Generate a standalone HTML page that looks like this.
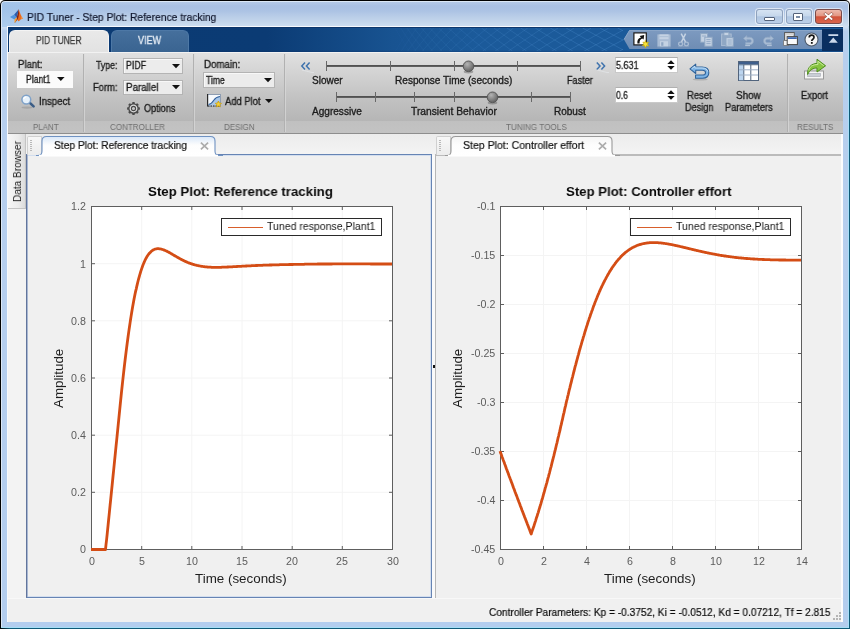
<!DOCTYPE html>
<html><head><meta charset="utf-8"><title>PID Tuner</title>
<style>
html,body{margin:0;padding:0;}
body{width:850px;height:629px;overflow:hidden;position:relative;background:#fff;font-family:"Liberation Sans",sans-serif;}
.b{position:absolute;box-sizing:border-box;}
.t{position:absolute;white-space:nowrap;transform-origin:0 0;display:block;will-change:transform;}
svg{position:absolute;overflow:visible;}
</style></head><body>
<div class="b" style="left:0px;top:0px;width:850px;height:629px;background:#000;border-radius:5px 5px 0 0;"></div>
<div class="b" style="left:1px;top:1px;width:848px;height:627px;background:#dbe7f5;border-radius:4px 4px 0 0;"></div>
<div class="b" style="left:2px;top:2px;width:846px;height:625px;border-radius:3px 3px 0 0;background:linear-gradient(to bottom,#b4c9e7 0,#a9c0e3 4px,#acc3e4 9px,#bacee8 15px,#c6d8ec 21px,#cfe0f3 25px,#b7cfee 29px,#b3cdee 100%);"></div>
<div class="b" style="left:1px;top:627px;width:848px;height:1px;background:#a4def6;"></div>
<div class="b" style="left:0px;top:628px;width:850px;height:1px;background:linear-gradient(to right,#000 0,#0f5a78 10px,#0f5a78 100%);"></div>
<div class="b" style="left:848px;top:26px;width:1px;height:602px;background:linear-gradient(to bottom,#c4daf0 0,#a8e0fa 40px,#a8e0fa 100%);"></div>
<div class="b" style="left:849px;top:6px;width:1px;height:623px;background:linear-gradient(to bottom,#000 0,#0a2a3a 22px,#0f5a78 40px,#0f5a78 100%);"></div>
<div class="b" style="left:2px;top:2px;width:120px;height:25px;background:linear-gradient(to right,rgba(158,196,236,.7),rgba(158,196,236,0));border-radius:3px 0 0 0;"></div>
<div class="b" style="left:7px;top:26px;width:836px;height:596px;background:#f7f9fc;"></div>
<svg style="left:10px;top:9px" width="14" height="15" viewBox="0 0 14 15">
<path d="M0,7.9 L4.2,5.6 L6.6,8.6 L4.4,10.6 Z" fill="#4f93db"/>
<path d="M4.2,5.6 L8.8,0.3 L7.6,5.5 L6.6,8.6 Z" fill="#2c5cab"/>
<path d="M8.8,0.3 C9.8,3.6 11,7.4 13.2,9.9 C11.8,9.6 10.6,10.6 9.4,11.8 C8.4,12.8 7.6,11.4 7,9.4 C7.6,6.4 8.4,3.4 8.8,0.3 Z" fill="#e8691c"/>
<path d="M8.8,0.3 C8.2,4 7,8.6 4.6,13.9 C6,12.8 7.4,11 8.2,9 C9,6.6 9.2,3.6 8.8,0.3 Z" fill="#7f2414"/>
<path d="M4.4,10.6 L6.6,8.6 L7,9.4 C6.4,11.4 5.6,13 4.6,13.9 Z" fill="#f2a035"/>
<path d="M11,6.4 C11.6,7.8 12.3,9 13.2,9.9 C12.4,9.7 11.6,10 10.9,10.5 Z" fill="#f3a04a" opacity=".7"/>
</svg>
<span class="t" style="left:27.00px;top:12.02px;font-size:11.2px;line-height:11.2px;color:#10162c;font-weight:normal;transform:scaleX(0.9197);-webkit-text-stroke:0.2px #10162c;">PID Tuner - Step Plot: Reference tracking</span>
<div class="b" style="left:756px;top:9px;width:27px;height:15px;border:1px solid #8fa2bd;border-radius:3px;background:linear-gradient(to bottom,#d6e3f2 0,#c6d7eb 45%,#b0c6e2 52%,#bbcfe8 100%);box-shadow:0 0 0 1px rgba(255,255,255,.6);"></div>
<div class="b" style="left:785.5px;top:9px;width:26px;height:15px;border:1px solid #8fa2bd;border-radius:3px;background:linear-gradient(to bottom,#d6e3f2 0,#c6d7eb 45%,#b0c6e2 52%,#bbcfe8 100%);box-shadow:0 0 0 1px rgba(255,255,255,.6);"></div>
<div class="b" style="left:814.5px;top:9px;width:27px;height:15px;border:1px solid #7b4a48;border-radius:3px;background:linear-gradient(to bottom,#ecb9ac 0,#e39683 45%,#d2523a 52%,#d8644c 100%);box-shadow:0 0 0 1px rgba(255,255,255,.55);"></div>
<div class="b" style="left:764px;top:17px;width:11px;height:4px;background:#fff;border:1px solid #54627a;border-radius:1px;"></div>
<div class="b" style="left:793px;top:12.6px;width:10px;height:8px;background:#fff;border:1px solid #54627a;border-radius:1px;"></div>
<div class="b" style="left:796px;top:15.6px;width:4px;height:2px;background:#7c8da6;"></div>
<svg style="left:823.5px;top:13.2px" width="9" height="7" viewBox="0 0 9 8" preserveAspectRatio="none"><path d="M1.6,1.2 L7.4,6.8 M7.4,1.2 L1.6,6.8" stroke="#7a4038" stroke-width="3.2" stroke-linecap="square" opacity=".7"/><path d="M1.6,1.2 L7.4,6.8 M7.4,1.2 L1.6,6.8" stroke="#fff" stroke-width="2" stroke-linecap="square"/></svg>
<div class="b" style="left:8px;top:27px;width:835px;height:25px;background:linear-gradient(to right,#0b3a73 0,#0b3b74 31%,#185391 46%,#1b5a9a 56%,#1b5a9a 100%);"></div>
<div class="b" style="left:8px;top:27px;width:835px;height:1px;background:#0a3266;opacity:.85;"></div>
<div class="b" style="left:8px;top:50px;width:835px;height:2px;background:linear-gradient(rgba(10,40,90,0),rgba(10,40,90,.35));"></div>
<svg style="left:395px;top:28px;overflow:hidden" width="228" height="23" viewBox="0 0 228 23"><path d="M0.0,0 L14.4,24 M14.4,0 L0.0,24" stroke="#4f8fd0" stroke-width="0.7" opacity="0.08" fill="none"/><path d="M5.6,0 L21.7,24 M21.7,0 L5.6,24" stroke="#4f8fd0" stroke-width="0.7" opacity="0.10" fill="none"/><path d="M11.8,0 L29.8,24 M29.8,0 L11.8,24" stroke="#4f8fd0" stroke-width="0.7" opacity="0.12" fill="none"/><path d="M18.8,0 L38.5,24 M38.5,0 L18.8,24" stroke="#4f8fd0" stroke-width="0.7" opacity="0.15" fill="none"/><path d="M26.4,0 L47.9,24 M47.9,0 L26.4,24" stroke="#4f8fd0" stroke-width="0.7" opacity="0.17" fill="none"/><path d="M34.7,0 L57.9,24 M57.9,0 L34.7,24" stroke="#4f8fd0" stroke-width="0.7" opacity="0.19" fill="none"/><path d="M43.7,0 L68.7,24 M68.7,0 L43.7,24" stroke="#4f8fd0" stroke-width="0.7" opacity="0.21" fill="none"/><path d="M53.4,0 L80.1,24 M80.1,0 L53.4,24" stroke="#4f8fd0" stroke-width="0.7" opacity="0.23" fill="none"/><path d="M63.7,0 L92.2,24 M92.2,0 L63.7,24" stroke="#4f8fd0" stroke-width="0.7" opacity="0.26" fill="none"/><path d="M74.8,0 L105.0,24 M105.0,0 L74.8,24" stroke="#4f8fd0" stroke-width="0.7" opacity="0.28" fill="none"/><path d="M86.5,0 L118.5,24 M118.5,0 L86.5,24" stroke="#4f8fd0" stroke-width="0.7" opacity="0.30" fill="none"/><path d="M98.9,0 L132.7,24 M132.7,0 L98.9,24" stroke="#4f8fd0" stroke-width="0.7" opacity="0.32" fill="none"/><path d="M112.0,0 L147.5,24 M147.5,0 L112.0,24" stroke="#4f8fd0" stroke-width="0.7" opacity="0.34" fill="none"/><path d="M125.7,0 L163.0,24 M163.0,0 L125.7,24" stroke="#4f8fd0" stroke-width="0.7" opacity="0.37" fill="none"/><path d="M140.2,0 L179.2,24 M179.2,0 L140.2,24" stroke="#4f8fd0" stroke-width="0.7" opacity="0.39" fill="none"/><path d="M155.3,0 L196.1,24 M196.1,0 L155.3,24" stroke="#4f8fd0" stroke-width="0.7" opacity="0.41" fill="none"/><path d="M171.1,0 L213.7,24 M213.7,0 L171.1,24" stroke="#4f8fd0" stroke-width="0.7" opacity="0.43" fill="none"/><path d="M187.6,0 L231.9,24 M231.9,0 L187.6,24" stroke="#4f8fd0" stroke-width="0.7" opacity="0.45" fill="none"/><path d="M204.8,0 L250.9,24 M250.9,0 L204.8,24" stroke="#4f8fd0" stroke-width="0.7" opacity="0.48" fill="none"/><path d="M222.6,0 L270.5,24 M270.5,0 L222.6,24" stroke="#4f8fd0" stroke-width="0.7" opacity="0.50" fill="none"/><path d="M241.2,0 L290.8,24 M290.8,0 L241.2,24" stroke="#4f8fd0" stroke-width="0.7" opacity="0.52" fill="none"/><path d="M260.4,0 L311.8,24 M311.8,0 L260.4,24" stroke="#4f8fd0" stroke-width="0.7" opacity="0.54" fill="none"/><path d="M280.3,0 L333.4,24 M333.4,0 L280.3,24" stroke="#4f8fd0" stroke-width="0.7" opacity="0.55" fill="none"/><path d="M300.9,0 L355.8,24 M355.8,0 L300.9,24" stroke="#4f8fd0" stroke-width="0.7" opacity="0.55" fill="none"/><path d="M322.2,0 L378.8,24 M378.8,0 L322.2,24" stroke="#4f8fd0" stroke-width="0.7" opacity="0.55" fill="none"/><path d="M344.1,0 L402.5,24 M402.5,0 L344.1,24" stroke="#4f8fd0" stroke-width="0.7" opacity="0.55" fill="none"/></svg>
<div class="b" style="left:9px;top:30px;width:100px;height:23px;background:linear-gradient(to bottom,#e9e9e9 0,#e2e2e2 100%);border-radius:6px 6px 0 0;border:1px solid #f4f4f4;border-bottom:none;"></div>
<span class="t" style="left:35.70px;top:35.06px;font-size:10.8px;line-height:10.8px;color:#3a3a3a;font-weight:normal;transform:scaleX(0.7844);-webkit-text-stroke:0.25px #3a3a3a;">PID TUNER</span>
<div class="b" style="left:111px;top:30px;width:78px;height:22px;background:linear-gradient(to bottom,#456f9c 0,#3a6491 100%);border-radius:6px 6px 0 0;border:1px solid #4d78a6;border-bottom:none;"></div>
<span class="t" style="left:138.00px;top:35.06px;font-size:10.8px;line-height:10.8px;color:#e4ecf5;font-weight:normal;transform:scaleX(0.8333);-webkit-text-stroke:0.35px #e4ecf5;">VIEW</span>
<svg style="left:623.5px;top:30px" width="198.5" height="20" viewBox="0 0 198.5 20"><defs><linearGradient id="qg" x1="0" y1="0" x2="0" y2="1"><stop offset="0" stop-color="#7d9ac0"/><stop offset="1" stop-color="#6f8db4"/></linearGradient></defs><path d="M0,9.5 L5.5,0 L198.5,0 L198.5,19 L5.5,19 Z" fill="url(#qg)"/><path d="M0,9.5 L5.5,0.5 L198.5,0.5" fill="none" stroke="#8ba6c8" stroke-width="1"/></svg>
<div class="b" style="left:822px;top:29px;width:21px;height:22px;background:#0a2f60;"></div>
<div class="b" style="left:8px;top:52px;width:835px;height:70px;background:linear-gradient(to bottom,#e1e1e1 0,#d4d4d4 28%,#c3c3c3 64%,#b5b5b5 100%);"></div>
<div class="b" style="left:8px;top:52px;width:835px;height:1px;background:#f2f2f2;"></div>
<div class="b" style="left:8px;top:121px;width:835px;height:12px;background:linear-gradient(to bottom,#c0c0c0,#c3c3c3);"></div>
<div class="b" style="left:8px;top:133px;width:835px;height:1px;background:#8e8e8e;"></div>
<div class="b" style="left:83px;top:54px;width:1px;height:78px;background:#b1b1b1;"></div>
<div class="b" style="left:84px;top:54px;width:1px;height:78px;background:#dadada;opacity:.7;"></div>
<div class="b" style="left:193px;top:54px;width:1px;height:78px;background:#b1b1b1;"></div>
<div class="b" style="left:194px;top:54px;width:1px;height:78px;background:#dadada;opacity:.7;"></div>
<div class="b" style="left:284px;top:54px;width:1px;height:78px;background:#b1b1b1;"></div>
<div class="b" style="left:285px;top:54px;width:1px;height:78px;background:#dadada;opacity:.7;"></div>
<div class="b" style="left:787px;top:54px;width:1px;height:78px;background:#b1b1b1;"></div>
<div class="b" style="left:788px;top:54px;width:1px;height:78px;background:#dadada;opacity:.7;"></div>
<span class="t" style="left:17.50px;top:59.63px;font-size:10px;line-height:10px;color:#1c1c1c;font-weight:normal;transform:scaleX(0.9581);-webkit-text-stroke:0.32px #1c1c1c;">Plant:</span>
<div class="b" style="left:17px;top:71px;width:56px;height:17px;background:#fbfbfb;"></div>
<span class="t" style="left:26.40px;top:74.83px;font-size:10px;line-height:10px;color:#1c1c1c;font-weight:normal;transform:scaleX(0.8640);-webkit-text-stroke:0.32px #1c1c1c;">Plant1</span>
<svg style="left:56.7px;top:77.4px" width="7.6" height="4" viewBox="0 0 7.6 4"><path d="M0,0 L7.6,0 L3.8,4 Z" fill="#111"/></svg>
<svg style="left:20px;top:94px" width="16" height="15" viewBox="0 0 16 15">
<ellipse cx="7" cy="13.6" rx="5.5" ry="1.1" fill="#8a8a8a" opacity=".45"/>
<path d="M9.6,8.6 L13.6,12.4" stroke="#3b5d86" stroke-width="2.6" stroke-linecap="round"/>
<circle cx="6.3" cy="5.6" r="4.4" fill="#e6f1fb" stroke="#7fa2c9" stroke-width="1.5"/>
<path d="M3.6,5 A3,3 0 0 1 6.2,2.8" stroke="#fff" stroke-width="1.2" fill="none"/>
</svg>
<span class="t" style="left:38.60px;top:96.83px;font-size:10px;line-height:10px;color:#1c1c1c;font-weight:normal;transform:scaleX(0.9615);-webkit-text-stroke:0.32px #1c1c1c;">Inspect</span>
<span class="t" style="left:96.30px;top:61.33px;font-size:10px;line-height:10px;color:#1c1c1c;font-weight:normal;transform:scaleX(0.8790);-webkit-text-stroke:0.32px #1c1c1c;">Type:</span>
<span class="t" style="left:93.00px;top:82.83px;font-size:10px;line-height:10px;color:#1c1c1c;font-weight:normal;transform:scaleX(0.9384);-webkit-text-stroke:0.32px #1c1c1c;">Form:</span>
<div class="b" style="left:123px;top:58px;width:60px;height:15.5px;background:#ececec;border:1px solid #b4b4b4;box-shadow:inset 1px 1px 0 #f8f8f8;"></div>
<span class="t" style="left:125.60px;top:61.33px;font-size:10px;line-height:10px;color:#1c1c1c;font-weight:normal;transform:scaleX(0.8780);-webkit-text-stroke:0.32px #1c1c1c;">PIDF</span>
<svg style="left:172.4px;top:63.7px" width="8" height="4.2" viewBox="0 0 8 4.2"><path d="M0,0 L8,0 L4.0,4.2 Z" fill="#111"/></svg>
<div class="b" style="left:123px;top:79.5px;width:60px;height:15.5px;background:#ececec;border:1px solid #b4b4b4;box-shadow:inset 1px 1px 0 #f8f8f8;"></div>
<span class="t" style="left:125.60px;top:82.83px;font-size:10px;line-height:10px;color:#1c1c1c;font-weight:normal;transform:scaleX(0.9745);-webkit-text-stroke:0.32px #1c1c1c;">Parallel</span>
<svg style="left:172.4px;top:85.2px" width="8" height="4.2" viewBox="0 0 8 4.2"><path d="M0,0 L8,0 L4.0,4.2 Z" fill="#111"/></svg>
<svg style="left:126.5px;top:102.2px" width="13" height="13" viewBox="0 0 13 13">
<g transform="translate(6.5,6.5)">
<g fill="#4a4a4a"><rect x="-1.3" y="-6.4" width="2.6" height="3" rx=".6" transform="rotate(0)"/><rect x="-1.3" y="-6.4" width="2.6" height="3" rx=".6" transform="rotate(45)"/><rect x="-1.3" y="-6.4" width="2.6" height="3" rx=".6" transform="rotate(90)"/><rect x="-1.3" y="-6.4" width="2.6" height="3" rx=".6" transform="rotate(135)"/><rect x="-1.3" y="-6.4" width="2.6" height="3" rx=".6" transform="rotate(180)"/><rect x="-1.3" y="-6.4" width="2.6" height="3" rx=".6" transform="rotate(225)"/><rect x="-1.3" y="-6.4" width="2.6" height="3" rx=".6" transform="rotate(270)"/><rect x="-1.3" y="-6.4" width="2.6" height="3" rx=".6" transform="rotate(315)"/></g>
<circle r="4.6" fill="#dcdcdc" stroke="#4a4a4a" stroke-width="1.3"/>
<circle r="2.1" fill="#c8c8c8" stroke="#4a4a4a" stroke-width="1.1"/>
</g></svg>
<span class="t" style="left:144.30px;top:103.73px;font-size:10px;line-height:10px;color:#1c1c1c;font-weight:normal;transform:scaleX(0.9111);-webkit-text-stroke:0.32px #1c1c1c;">Options</span>
<span class="t" style="left:203.80px;top:59.63px;font-size:10px;line-height:10px;color:#1c1c1c;font-weight:normal;transform:scaleX(0.9721);-webkit-text-stroke:0.32px #1c1c1c;">Domain:</span>
<div class="b" style="left:203px;top:72px;width:72px;height:16px;background:#ececec;border:1px solid #b4b4b4;box-shadow:inset 1px 1px 0 #f8f8f8;"></div>
<span class="t" style="left:206.30px;top:75.83px;font-size:10px;line-height:10px;color:#1c1c1c;font-weight:normal;transform:scaleX(0.8558);-webkit-text-stroke:0.32px #1c1c1c;">Time</span>
<svg style="left:264.4px;top:78.0px" width="8" height="4.2" viewBox="0 0 8 4.2"><path d="M0,0 L8,0 L4.0,4.2 Z" fill="#111"/></svg>
<svg style="left:206.5px;top:94px" width="16" height="14" viewBox="0 0 16 14">
<rect x=".5" y=".5" width="13" height="11.5" fill="#f6f9fd" stroke="#8e9db2" stroke-width="1"/>
<path d="M.6,0 L.6,12.4" stroke="#2a2a2a" stroke-width="1.2"/>
<path d="M1.5,10.5 C4,10 5.5,8.5 7,6 C8.5,3.6 10,2.8 13,2.5 L13,11.5 L1.5,11.5 Z" fill="#a9c6e6"/>
<path d="M1.5,10.5 C4,10 5.5,8.5 7,6 C8.5,3.6 10,2.8 13,2.5" fill="none" stroke="#2f5f9c" stroke-width="1.1"/>
<path d="M1,12 L13.5,12" stroke="#222" stroke-width="1.2" stroke-dasharray="1.5,1"/>
<path d="M11.4,7 L12.3,9 L14.4,9.3 L12.9,10.8 L13.3,12.9 L11.4,11.9 L9.5,12.9 L9.9,10.8 L8.4,9.3 L10.5,9 Z" fill="#f6d23a" stroke="#c89a00" stroke-width=".7" stroke-linejoin="round"/>
</svg>
<span class="t" style="left:224.50px;top:96.63px;font-size:10px;line-height:10px;color:#1c1c1c;font-weight:normal;transform:scaleX(0.9391);-webkit-text-stroke:0.32px #1c1c1c;">Add Plot</span>
<svg style="left:264.5px;top:99.4px" width="7.6" height="4" viewBox="0 0 7.6 4"><path d="M0,0 L7.6,0 L3.8,4 Z" fill="#111"/></svg>
<span class="t" style="left:32.75px;top:123.07px;font-size:8.3px;line-height:8.3px;color:#6f6f6f;font-weight:normal;transform:scaleX(0.9532);">PLANT</span>
<span class="t" style="left:110.20px;top:123.07px;font-size:8.3px;line-height:8.3px;color:#6f6f6f;font-weight:normal;transform:scaleX(0.9696);">CONTROLLER</span>
<span class="t" style="left:223.65px;top:123.07px;font-size:8.3px;line-height:8.3px;color:#6f6f6f;font-weight:normal;transform:scaleX(0.9647);">DESIGN</span>
<span class="t" style="left:506.20px;top:123.07px;font-size:8.3px;line-height:8.3px;color:#6f6f6f;font-weight:normal;transform:scaleX(0.9814);">TUNING TOOLS</span>
<span class="t" style="left:796.80px;top:123.07px;font-size:8.3px;line-height:8.3px;color:#6f6f6f;font-weight:normal;transform:scaleX(0.9663);">RESULTS</span>
<svg style="left:301px;top:62px" width="10" height="8" viewBox="0 0 10 8"><path d="M4,0.5 L0.8,4 L4,7.5 M8.6,0.5 L5.4,4 L8.6,7.5" fill="none" stroke="#3f73ad" stroke-width="1.5"/></svg>
<svg style="left:302px;top:70px" width="12" height="3" viewBox="0 0 12 3"><path d="M0,0 L10,2.5 L12,2.5" stroke="#eef2f6" stroke-width="1.1" fill="none" opacity=".45"/></svg>
<svg style="left:595.5px;top:62px" width="10" height="8" viewBox="0 0 10 8"><path d="M0.8,0.5 L4,4 L0.8,7.5 M5.4,0.5 L8.6,4 L5.4,7.5" fill="none" stroke="#3f73ad" stroke-width="1.5"/></svg>
<svg style="left:596.5px;top:70px" width="12" height="3" viewBox="0 0 12 3"><path d="M0,0 L10,2.5 L12,2.5" stroke="#eef2f6" stroke-width="1.1" fill="none" opacity=".45"/></svg>
<div class="b" style="left:326px;top:65px;width:255px;height:2px;background:linear-gradient(#4a4a4a,#666);"></div>
<div class="b" style="left:326px;top:61px;width:1px;height:10px;background:#686868;"></div>
<div class="b" style="left:390px;top:61px;width:1px;height:10px;background:#686868;"></div>
<div class="b" style="left:454px;top:61px;width:1px;height:10px;background:#686868;"></div>
<div class="b" style="left:517px;top:61px;width:1px;height:10px;background:#686868;"></div>
<div class="b" style="left:580px;top:61px;width:1px;height:10px;background:#686868;"></div>
<svg style="left:462.1px;top:60px" width="13" height="14" viewBox="0 0 13 14"><defs><radialGradient id="tg66" cx=".38" cy=".3" r=".8"><stop offset="0" stop-color="#b4b4b4"/><stop offset=".5" stop-color="#868686"/><stop offset="1" stop-color="#565656"/></radialGradient></defs><ellipse cx="6.5" cy="11.8" rx="4.8" ry="1.7" fill="#5a5a5a" opacity=".45"/><circle cx="6.5" cy="6.3" r="5.3" fill="url(#tg66)" stroke="#585858" stroke-width="1"/></svg>
<div class="b" style="left:336px;top:96px;width:235px;height:2px;background:linear-gradient(#4a4a4a,#666);"></div>
<div class="b" style="left:336px;top:92px;width:1px;height:10px;background:#686868;"></div>
<div class="b" style="left:375px;top:92px;width:1px;height:10px;background:#686868;"></div>
<div class="b" style="left:414px;top:92px;width:1px;height:10px;background:#686868;"></div>
<div class="b" style="left:454px;top:92px;width:1px;height:10px;background:#686868;"></div>
<div class="b" style="left:492px;top:92px;width:1px;height:10px;background:#686868;"></div>
<div class="b" style="left:531px;top:92px;width:1px;height:10px;background:#686868;"></div>
<div class="b" style="left:570px;top:92px;width:1px;height:10px;background:#686868;"></div>
<svg style="left:485.9px;top:91px" width="13" height="14" viewBox="0 0 13 14"><defs><radialGradient id="tg97" cx=".38" cy=".3" r=".8"><stop offset="0" stop-color="#b4b4b4"/><stop offset=".5" stop-color="#868686"/><stop offset="1" stop-color="#565656"/></radialGradient></defs><ellipse cx="6.5" cy="11.8" rx="4.8" ry="1.7" fill="#5a5a5a" opacity=".45"/><circle cx="6.5" cy="6.3" r="5.3" fill="url(#tg97)" stroke="#585858" stroke-width="1"/></svg>
<span class="t" style="left:311.50px;top:75.53px;font-size:10px;line-height:10px;color:#1c1c1c;font-weight:normal;transform:scaleX(0.9978);-webkit-text-stroke:0.32px #1c1c1c;">Slower</span>
<span class="t" style="left:394.90px;top:75.53px;font-size:10px;line-height:10px;color:#1c1c1c;font-weight:normal;transform:scaleX(1.0098);-webkit-text-stroke:0.32px #1c1c1c;">Response Time (seconds)</span>
<span class="t" style="left:567.00px;top:75.53px;font-size:10px;line-height:10px;color:#1c1c1c;font-weight:normal;transform:scaleX(0.9068);-webkit-text-stroke:0.32px #1c1c1c;">Faster</span>
<span class="t" style="left:311.50px;top:106.63px;font-size:10px;line-height:10px;color:#1c1c1c;font-weight:normal;transform:scaleX(1.0067);-webkit-text-stroke:0.32px #1c1c1c;">Aggressive</span>
<span class="t" style="left:411.00px;top:106.63px;font-size:10px;line-height:10px;color:#1c1c1c;font-weight:normal;transform:scaleX(1.0268);-webkit-text-stroke:0.32px #1c1c1c;">Transient Behavior</span>
<span class="t" style="left:554.30px;top:106.63px;font-size:10px;line-height:10px;color:#1c1c1c;font-weight:normal;transform:scaleX(1.0005);-webkit-text-stroke:0.32px #1c1c1c;">Robust</span>
<div class="b" style="left:615px;top:57px;width:63px;height:16px;background:#fff;border:1px solid #c9c9c9;border-top-color:#b0b0b0;"></div>
<span class="t" style="left:616.00px;top:61.23px;font-size:10px;line-height:10px;color:#1c1c1c;font-weight:normal;transform:scaleX(0.8991);-webkit-text-stroke:0.32px #1c1c1c;">5.631</span>
<svg style="left:667px;top:60px" width="8" height="10" viewBox="0 0 8 10"><path d="M0.3,4 L7.7,4 L4,0.2 Z M0.3,6 L7.7,6 L4,9.8 Z" fill="#111"/></svg>
<div class="b" style="left:615px;top:87px;width:63px;height:16px;background:#fff;border:1px solid #c9c9c9;border-top-color:#b0b0b0;"></div>
<span class="t" style="left:616.00px;top:91.23px;font-size:10px;line-height:10px;color:#1c1c1c;font-weight:normal;transform:scaleX(0.8632);-webkit-text-stroke:0.32px #1c1c1c;">0.6</span>
<svg style="left:667px;top:90px" width="8" height="10" viewBox="0 0 8 10"><path d="M0.3,4 L7.7,4 L4,0.2 Z M0.3,6 L7.7,6 L4,9.8 Z" fill="#111"/></svg>
<svg style="left:688.6px;top:62.8px" width="21.5" height="17.8" viewBox="0 0 23 19">
<ellipse cx="12" cy="17.6" rx="8" ry="1.2" fill="#777" opacity=".35"/>
<path d="M1,6.3 L7.2,1.2 L7.2,4.3 L14,4.3 C18.8,4.3 21.2,7 21.2,10.3 C21.2,13.8 18.6,16.2 14.5,16.2 L7,16.2 L7,12.9 L14.2,12.9 C16.4,12.9 17.7,11.9 17.7,10.3 C17.7,8.7 16.4,7.8 14.2,7.8 L7.2,7.8 L7.2,11.2 Z" fill="#7db4e6" stroke="#2f6299" stroke-width="1.1" stroke-linejoin="round"/>
<path d="M2.8,6.2 L6.3,3.4 L6.3,5.3 L14,5.3 C17.6,5.3 19.6,7 20.1,9.2" fill="none" stroke="#c9e2f7" stroke-width="1"/>
</svg>
<span class="t" style="left:686.65px;top:90.73px;font-size:10px;line-height:10px;color:#1c1c1c;font-weight:normal;transform:scaleX(0.9455);-webkit-text-stroke:0.32px #1c1c1c;">Reset</span>
<span class="t" style="left:684.95px;top:102.83px;font-size:10px;line-height:10px;color:#1c1c1c;font-weight:normal;transform:scaleX(0.9155);-webkit-text-stroke:0.32px #1c1c1c;">Design</span>
<svg style="left:738px;top:61px" width="21" height="20" viewBox="0 0 21 20">
<rect x=".5" y=".5" width="20" height="19" fill="#fff" stroke="#51647d" stroke-width="1"/>
<rect x="1" y="1" width="19" height="2.6" fill="#3f5f8c"/>
<rect x="1" y="3.6" width="4.6" height="15.6" fill="#bcd5ef"/>
<path d="M5.8,3.6 L5.8,19 M12.8,3.6 L12.8,19" stroke="#51647d" stroke-width="1"/>
<path d="M1,8.8 L20,8.8 M1,14 L20,14" stroke="#9fb0c6" stroke-width="1"/>
<path d="M1,3.8 L20,3.8" stroke="#51647d" stroke-width=".8"/>
</svg>
<span class="t" style="left:736.45px;top:90.73px;font-size:10px;line-height:10px;color:#1c1c1c;font-weight:normal;transform:scaleX(0.9874);-webkit-text-stroke:0.32px #1c1c1c;">Show</span>
<span class="t" style="left:725.15px;top:102.83px;font-size:10px;line-height:10px;color:#1c1c1c;font-weight:normal;transform:scaleX(0.9229);-webkit-text-stroke:0.32px #1c1c1c;">Parameters</span>
<svg style="left:803px;top:58px" width="24" height="23" viewBox="0 0 24 23">
<rect x="1.5" y="13" width="19" height="8" fill="#f6f6f6" stroke="#9a9a9a" stroke-width="1"/>
<rect x="4.5" y="15.3" width="13" height="3.2" fill="#c9ced6" stroke="#a4a9b1" stroke-width=".6"/>
<path d="M4.6,16.5 C4.2,9.5 8.2,5.6 14,5.4 L14,1.2 L22.6,7.8 L14,14 L14,10 C10.4,10 7,11.4 4.6,16.5 Z" fill="#86c440" stroke="#4f8f1f" stroke-width="1" stroke-linejoin="round"/>
<path d="M5.8,12.5 C6.4,8.6 9.6,6.6 14.9,6.5 L14.9,3.2 L20.8,7.8" fill="none" stroke="#c9eb9c" stroke-width="1"/>
</svg>
<span class="t" style="left:801.10px;top:90.73px;font-size:10px;line-height:10px;color:#1c1c1c;font-weight:normal;transform:scaleX(0.9342);-webkit-text-stroke:0.32px #1c1c1c;">Export</span>
<div class="b" style="left:8px;top:134px;width:834.5px;height:487.5px;background:#fcfcfd;"></div>
<div class="b" style="left:8px;top:134px;width:832.5px;height:487.5px;background:#f0f0f0;"></div>
<div class="b" style="left:8px;top:134px;width:18px;height:464px;background:#f3f3f3;"></div>
<div class="b" style="left:8px;top:134px;width:18px;height:75px;background:linear-gradient(to right,#f6f6f6 0,#ececec 60%,#dcdcdc 100%);border-right:1px solid #c4c4c4;border-bottom:1px solid #c4c4c4;"></div>
<span class="t" style="left:12.3px;top:202.2px;font-size:11px;line-height:11px;color:#222;transform-origin:0 0;transform:rotate(-90deg) scaleX(0.9154);">Data Browser</span>
<div class="b" style="left:26px;top:134px;width:814.5px;height:21px;background:linear-gradient(to bottom,#ececec,#f4f4f4);"></div>
<div class="b" style="left:26px;top:154px;width:406px;height:444px;border:1px solid #6684b4;background:#f0f0f0;box-shadow:inset 0 0 0 1px #d3deee;border-left-color:#62759c;"></div>
<div class="b" style="left:27px;top:155px;width:1px;height:442px;background:#a9b8d3;"></div>
<div class="b" style="left:435px;top:154px;width:405.5px;height:445px;border-left:1px solid #b6b6b6;border-top:2px solid #bbbbbb;background:#f0f0f0;"></div>
<div class="b" style="left:436px;top:598px;width:405px;height:1px;background:#f9f9f9;"></div>
<div class="b" style="left:432px;top:155px;width:3px;height:443px;background:#fafafa;"></div>
<div class="b" style="left:433px;top:365px;width:2px;height:3px;background:#111;"></div>
<div class="b" style="left:27px;top:136px;width:15px;height:19px;background:linear-gradient(to bottom,#f8f8f8,#ececec);border:1px solid #d0d0d0;border-bottom:none;border-radius:2px 0 0 0;"></div>
<div class="b" style="left:30px;top:139.5px;width:2px;height:1px;background:#b9b9b9;"></div>
<div class="b" style="left:30px;top:141.5px;width:2px;height:1px;background:#b9b9b9;"></div>
<div class="b" style="left:30px;top:143.5px;width:2px;height:1px;background:#b9b9b9;"></div>
<div class="b" style="left:30px;top:145.5px;width:2px;height:1px;background:#b9b9b9;"></div>
<div class="b" style="left:30px;top:147.5px;width:2px;height:1px;background:#b9b9b9;"></div>
<div class="b" style="left:30px;top:149.5px;width:2px;height:1px;background:#b9b9b9;"></div>
<div class="b" style="left:436px;top:136px;width:15px;height:19px;background:linear-gradient(to bottom,#f8f8f8,#ececec);border:1px solid #d0d0d0;border-bottom:none;border-radius:2px 0 0 0;"></div>
<div class="b" style="left:439px;top:139.5px;width:2px;height:1px;background:#b9b9b9;"></div>
<div class="b" style="left:439px;top:141.5px;width:2px;height:1px;background:#b9b9b9;"></div>
<div class="b" style="left:439px;top:143.5px;width:2px;height:1px;background:#b9b9b9;"></div>
<div class="b" style="left:439px;top:145.5px;width:2px;height:1px;background:#b9b9b9;"></div>
<div class="b" style="left:439px;top:147.5px;width:2px;height:1px;background:#b9b9b9;"></div>
<div class="b" style="left:439px;top:149.5px;width:2px;height:1px;background:#b9b9b9;"></div>
<svg style="left:36px;top:135px" width="187" height="21" viewBox="0 0 187 21"><defs><linearGradient id="dt42" x1="0" y1="0" x2="0" y2="1"><stop offset="0" stop-color="#d9e7f8"/><stop offset=".45" stop-color="#fdfdfd"/><stop offset="1" stop-color="#ffffff"/></linearGradient></defs><path d="M0,20.5 L2,20.5 C5,20.5 6,19 6,16 L6,6 C6,3 7.5,1.5 10.5,1.5 L174.5,1.5 C177.5,1.5 179,3 179,6 L179,16 C179,19 180,20.5 183,20.5 L187,20.5" fill="url(#dt42)" stroke="#6f92c2" stroke-width="1.1"/><path d="M3,20.6 L182,20.6" stroke="#fff" stroke-width="1.6"/></svg>
<span class="t" style="left:54.00px;top:139.99px;font-size:11px;line-height:11px;color:#111;font-weight:normal;transform:scaleX(0.9296);-webkit-text-stroke:0.2px #111;">Step Plot: Reference tracking</span>
<svg style="left:200.0px;top:141.5px" width="9" height="8" viewBox="0 0 9 8"><path d="M0.9,0.7 L8.1,7.3 M8.1,0.7 L0.9,7.3" stroke="#acacac" stroke-width="1.7"/></svg>
<svg style="left:445px;top:135px" width="175" height="21" viewBox="0 0 175 21"><defs><linearGradient id="dt451" x1="0" y1="0" x2="0" y2="1"><stop offset="0" stop-color="#f4f4f4"/><stop offset=".45" stop-color="#fdfdfd"/><stop offset="1" stop-color="#ffffff"/></linearGradient></defs><path d="M0,20.5 L2,20.5 C5,20.5 6,19 6,16 L6,6 C6,3 7.5,1.5 10.5,1.5 L162.5,1.5 C165.5,1.5 167,3 167,6 L167,16 C167,19 168,20.5 171,20.5 L175,20.5" fill="url(#dt451)" stroke="#9a9a9a" stroke-width="1.1"/><path d="M3,20.6 L170,20.6" stroke="#fff" stroke-width="1.6"/></svg>
<span class="t" style="left:463.00px;top:139.99px;font-size:11px;line-height:11px;color:#111;font-weight:normal;transform:scaleX(0.9576);-webkit-text-stroke:0.2px #111;">Step Plot: Controller effort</span>
<svg style="left:597.7px;top:141.5px" width="9" height="8" viewBox="0 0 9 8"><path d="M0.9,0.7 L8.1,7.3 M8.1,0.7 L0.9,7.3" stroke="#acacac" stroke-width="1.7"/></svg>
<div class="b" style="left:8px;top:598px;width:832.5px;height:23.5px;background:#f0f0f0;"></div>
<div class="b" style="left:8px;top:598px;width:835px;height:1px;background:#f8f8f8;"></div>
<span class="t" style="left:489.00px;top:606.59px;font-size:11px;line-height:11px;color:#0c0c0c;font-weight:normal;transform:scaleX(0.9221);-webkit-text-stroke:0.2px #0c0c0c;">Controller Parameters: Kp = -0.3752, Ki = -0.0512, Kd = 0.07212, Tf = 2.815</span>
<div class="b" style="left:839px;top:612px;width:2px;height:2px;background:#b4b4b4;"></div>
<div class="b" style="left:839px;top:615px;width:2px;height:2px;background:#b4b4b4;"></div>
<div class="b" style="left:839px;top:618px;width:2px;height:2px;background:#b4b4b4;"></div>
<div class="b" style="left:836px;top:615px;width:2px;height:2px;background:#b4b4b4;"></div>
<div class="b" style="left:836px;top:618px;width:2px;height:2px;background:#b4b4b4;"></div>
<div class="b" style="left:833px;top:618px;width:2px;height:2px;background:#b4b4b4;"></div>
<svg style="left:0;top:0" width="850" height="629" viewBox="0 0 850 629"><rect x="91.5" y="206.5" width="301" height="343" fill="#fff"/><path d="M91.5,207 L91.5,549 M141.7,207 L141.7,549 M191.8,207 L191.8,549 M242.0,207 L242.0,549 M292.2,207 L292.2,549 M342.3,207 L342.3,549 M392.5,207 L392.5,549 M92,549.5 L392,549.5 M92,492.3 L392,492.3 M92,435.2 L392,435.2 M92,378.0 L392,378.0 M92,320.8 L392,320.8 M92,263.7 L392,263.7 M92,206.5 L392,206.5" stroke="#f4f4f4" stroke-width="1" fill="none"/><rect x="91.5" y="206.5" width="301" height="343" fill="none" stroke="#5e5e5e" stroke-width="1"/><path d="M91.5,549 L91.5,546 M91.5,207 L91.5,210 M141.7,549 L141.7,546 M141.7,207 L141.7,210 M191.8,549 L191.8,546 M191.8,207 L191.8,210 M242.0,549 L242.0,546 M242.0,207 L242.0,210 M292.2,549 L292.2,546 M292.2,207 L292.2,210 M342.3,549 L342.3,546 M342.3,207 L342.3,210 M392.5,549 L392.5,546 M392.5,207 L392.5,210 M92,549.5 L95,549.5 M392,549.5 L389,549.5 M92,492.3 L95,492.3 M392,492.3 L389,492.3 M92,435.2 L95,435.2 M392,435.2 L389,435.2 M92,378.0 L95,378.0 M392,378.0 L389,378.0 M92,320.8 L95,320.8 M392,320.8 L389,320.8 M92,263.7 L95,263.7 M392,263.7 L389,263.7 M92,206.5 L95,206.5 M392,206.5 L389,206.5" stroke="#5e5e5e" stroke-width="1" fill="none"/><path d="M91.0,549.5 L91.5,549.5 L92.0,549.5 L92.5,549.5 L93.0,549.5 L93.5,549.5 L94.0,549.5 L94.5,549.5 L95.0,549.5 L95.5,549.5 L96.0,549.5 L96.5,549.5 L97.0,549.5 L97.5,549.5 L98.0,549.5 L98.5,549.5 L99.0,549.5 L99.5,549.5 L100.0,549.5 L100.5,549.5 L101.0,549.5 L101.5,549.5 L102.0,549.5 L102.5,549.5 L103.0,549.5 L103.5,549.5 L104.0,549.5 L104.5,549.5 L105.0,549.5 L105.5,549.5 L106.0,544.6 L106.6,539.7 L107.1,534.8 L107.6,529.9 L108.1,525.0 L108.6,520.0 L109.1,515.1 L109.6,510.2 L110.1,505.2 L110.6,500.3 L111.1,495.3 L111.6,490.4 L112.1,485.5 L112.6,480.5 L113.1,475.5 L113.6,470.6 L114.1,465.6 L114.6,460.6 L115.1,455.7 L115.6,450.7 L116.1,445.7 L116.6,440.8 L117.1,435.8 L117.6,430.8 L118.1,425.8 L118.6,420.8 L119.1,415.8 L119.6,410.8 L120.1,405.8 L120.6,400.9 L121.1,396.0 L121.6,391.2 L122.1,386.5 L122.6,381.9 L123.1,377.3 L123.6,372.9 L124.1,368.5 L124.6,364.2 L125.1,360.0 L125.6,355.9 L126.1,351.8 L126.6,347.9 L127.1,344.0 L127.6,340.2 L128.1,336.5 L128.6,332.9 L129.1,329.4 L129.6,326.0 L130.1,322.6 L130.6,319.3 L131.1,316.1 L131.6,313.0 L132.1,310.0 L132.6,307.1 L133.1,304.3 L133.6,301.5 L134.1,298.8 L134.6,296.3 L135.1,293.8 L135.6,291.4 L136.2,289.1 L136.7,286.8 L137.2,284.6 L137.7,282.5 L138.2,280.5 L138.7,278.6 L139.2,276.8 L139.7,275.0 L140.2,273.3 L140.7,271.6 L141.2,270.1 L141.7,268.6 L142.2,267.2 L142.7,265.8 L143.2,264.5 L143.7,263.3 L144.2,262.1 L144.7,261.0 L145.2,259.9 L145.7,258.9 L146.2,258.0 L146.7,257.1 L147.2,256.3 L147.7,255.5 L148.2,254.8 L148.7,254.1 L149.2,253.5 L149.7,252.9 L150.2,252.4 L150.7,251.9 L151.2,251.4 L151.7,251.0 L152.2,250.6 L152.7,250.3 L153.2,250.0 L153.7,249.7 L154.2,249.5 L154.7,249.3 L155.2,249.1 L155.7,249.0 L156.2,248.9 L156.7,248.8 L157.2,248.7 L157.7,248.7 L158.2,248.7 L158.7,248.7 L159.2,248.8 L159.7,248.8 L160.2,248.9 L160.7,249.0 L161.2,249.1 L161.7,249.2 L162.2,249.4 L162.7,249.5 L163.2,249.7 L163.7,249.9 L164.2,250.1 L164.7,250.3 L165.2,250.5 L165.7,250.8 L166.2,251.0 L166.8,251.2 L167.3,251.5 L167.8,251.8 L168.3,252.0 L168.8,252.3 L169.3,252.6 L169.8,252.8 L170.3,253.1 L170.8,253.4 L171.3,253.7 L171.8,254.0 L172.3,254.3 L172.8,254.6 L173.3,254.9 L173.8,255.2 L174.3,255.5 L174.8,255.8 L175.3,256.1 L175.8,256.3 L176.3,256.6 L176.8,256.9 L177.3,257.2 L177.8,257.5 L178.3,257.8 L178.8,258.1 L179.3,258.3 L179.8,258.6 L180.3,258.9 L180.8,259.2 L181.3,259.4 L181.8,259.7 L182.3,259.9 L182.8,260.2 L183.3,260.4 L183.8,260.7 L184.3,260.9 L184.8,261.2 L185.3,261.4 L185.8,261.6 L186.3,261.8 L186.8,262.1 L187.3,262.3 L187.8,262.5 L188.3,262.7 L188.8,262.9 L189.3,263.1 L189.8,263.2 L190.3,263.4 L190.8,263.6 L191.3,263.8 L191.8,263.9 L192.3,264.1 L192.8,264.3 L193.3,264.4 L193.8,264.6 L194.3,264.7 L194.8,264.9 L195.3,265.0 L195.8,265.1 L196.3,265.3 L196.9,265.4 L197.4,265.5 L197.9,265.6 L198.4,265.7 L198.9,265.8 L199.4,265.9 L199.9,266.0 L200.4,266.1 L200.9,266.2 L201.4,266.3 L201.9,266.4 L202.4,266.4 L202.9,266.5 L203.4,266.6 L203.9,266.7 L204.4,266.7 L204.9,266.8 L205.4,266.8 L205.9,266.9 L206.4,266.9 L206.9,267.0 L207.4,267.0 L207.9,267.1 L208.4,267.1 L208.9,267.1 L209.4,267.2 L209.9,267.2 L210.4,267.2 L210.9,267.2 L211.4,267.3 L211.9,267.3 L212.4,267.3 L212.9,267.3 L213.4,267.3 L213.9,267.3 L214.4,267.3 L214.9,267.3 L215.4,267.3 L215.9,267.3 L216.4,267.3 L216.9,267.3 L217.4,267.3 L217.9,267.3 L218.4,267.3 L218.9,267.3 L219.4,267.3 L219.9,267.3 L220.4,267.3 L220.9,267.3 L221.4,267.3 L221.9,267.2 L222.4,267.2 L222.9,267.2 L223.4,267.2 L223.9,267.2 L224.4,267.2 L224.9,267.1 L225.4,267.1 L225.9,267.1 L226.5,267.1 L227.0,267.0 L227.5,267.0 L228.0,267.0 L228.5,267.0 L229.0,266.9 L229.5,266.9 L230.0,266.9 L230.5,266.9 L231.0,266.8 L231.5,266.8 L232.0,266.8 L232.5,266.8 L233.0,266.7 L233.5,266.7 L234.0,266.7 L234.5,266.6 L235.0,266.6 L235.5,266.6 L236.0,266.6 L236.5,266.5 L237.0,266.5 L237.5,266.5 L238.0,266.4 L238.5,266.4 L239.0,266.4 L239.5,266.4 L240.0,266.3 L240.5,266.3 L241.0,266.3 L241.5,266.3 L242.0,266.2 L242.5,266.2 L243.0,266.2 L243.5,266.1 L244.0,266.1 L244.5,266.1 L245.0,266.1 L245.5,266.0 L246.0,266.0 L246.5,266.0 L247.0,266.0 L247.5,265.9 L248.0,265.9 L248.5,265.9 L249.0,265.9 L249.5,265.8 L250.0,265.8 L250.5,265.8 L251.0,265.8 L251.5,265.7 L252.0,265.7 L252.5,265.7 L253.0,265.7 L253.5,265.6 L254.0,265.6 L254.5,265.6 L255.0,265.6 L255.5,265.5 L256.0,265.5 L256.6,265.5 L257.1,265.5 L257.6,265.5 L258.1,265.4 L258.6,265.4 L259.1,265.4 L259.6,265.4 L260.1,265.4 L260.6,265.3 L261.1,265.3 L261.6,265.3 L262.1,265.3 L262.6,265.3 L263.1,265.2 L263.6,265.2 L264.1,265.2 L264.6,265.2 L265.1,265.2 L265.6,265.2 L266.1,265.1 L266.6,265.1 L267.1,265.1 L267.6,265.1 L268.1,265.1 L268.6,265.1 L269.1,265.0 L269.6,265.0 L270.1,265.0 L270.6,265.0 L271.1,265.0 L271.6,265.0 L272.1,265.0 L272.6,264.9 L273.1,264.9 L273.6,264.9 L274.1,264.9 L274.6,264.9 L275.1,264.9 L275.6,264.9 L276.1,264.8 L276.6,264.8 L277.1,264.8 L277.6,264.8 L278.1,264.8 L278.6,264.8 L279.1,264.8 L279.6,264.7 L280.1,264.7 L280.6,264.7 L281.1,264.7 L281.6,264.7 L282.1,264.7 L282.6,264.7 L283.1,264.7 L283.6,264.7 L284.1,264.6 L284.6,264.6 L285.1,264.6 L285.6,264.6 L286.1,264.6 L286.6,264.6 L287.2,264.6 L287.7,264.6 L288.2,264.6 L288.7,264.5 L289.2,264.5 L289.7,264.5 L290.2,264.5 L290.7,264.5 L291.2,264.5 L291.7,264.5 L292.2,264.5 L292.7,264.5 L293.2,264.5 L293.7,264.4 L294.2,264.4 L294.7,264.4 L295.2,264.4 L295.7,264.4 L296.2,264.4 L296.7,264.4 L297.2,264.4 L297.7,264.4 L298.2,264.4 L298.7,264.4 L299.2,264.3 L299.7,264.3 L300.2,264.3 L300.7,264.3 L301.2,264.3 L301.7,264.3 L302.2,264.3 L302.7,264.3 L303.2,264.3 L303.7,264.3 L304.2,264.3 L304.7,264.2 L305.2,264.2 L305.7,264.2 L306.2,264.2 L306.7,264.2 L307.2,264.2 L307.7,264.2 L308.2,264.2 L308.7,264.2 L309.2,264.2 L309.7,264.2 L310.2,264.2 L310.7,264.1 L311.2,264.1 L311.7,264.1 L312.2,264.1 L312.7,264.1 L313.2,264.1 L313.7,264.1 L314.2,264.1 L314.7,264.1 L315.2,264.1 L315.7,264.1 L316.2,264.1 L316.8,264.1 L317.3,264.0 L317.8,264.0 L318.3,264.0 L318.8,264.0 L319.3,264.0 L319.8,264.0 L320.3,264.0 L320.8,264.0 L321.3,264.0 L321.8,264.0 L322.3,264.0 L322.8,264.0 L323.3,264.0 L323.8,264.0 L324.3,264.0 L324.8,264.0 L325.3,264.0 L325.8,264.0 L326.3,264.0 L326.8,264.0 L327.3,264.0 L327.8,264.0 L328.3,264.0 L328.8,264.0 L329.3,264.0 L329.8,264.0 L330.3,264.0 L330.8,264.0 L331.3,264.0 L331.8,264.0 L332.3,264.0 L332.8,263.9 L333.3,263.9 L333.8,263.9 L334.3,263.9 L334.8,263.9 L335.3,263.9 L335.8,263.9 L336.3,263.9 L336.8,263.9 L337.3,263.9 L337.8,263.9 L338.3,263.9 L338.8,263.9 L339.3,263.9 L339.8,263.9 L340.3,263.9 L340.8,263.9 L341.3,263.9 L341.8,263.9 L342.3,263.9 L342.8,263.9 L343.3,263.9 L343.8,263.9 L344.3,263.9 L344.8,263.9 L345.3,263.9 L345.8,263.9 L346.3,263.9 L346.9,263.9 L347.4,263.9 L347.9,263.9 L348.4,263.9 L348.9,263.9 L349.4,263.9 L349.9,263.9 L350.4,263.9 L350.9,263.9 L351.4,263.9 L351.9,263.9 L352.4,263.9 L352.9,263.9 L353.4,263.9 L353.9,263.9 L354.4,263.9 L354.9,263.9 L355.4,263.9 L355.9,263.9 L356.4,263.9 L356.9,263.9 L357.4,263.9 L357.9,263.9 L358.4,263.9 L358.9,263.9 L359.4,263.9 L359.9,263.9 L360.4,263.9 L360.9,263.9 L361.4,263.9 L361.9,263.9 L362.4,263.9 L362.9,263.9 L363.4,263.9 L363.9,263.9 L364.4,263.9 L364.9,263.9 L365.4,263.9 L365.9,263.9 L366.4,263.9 L366.9,263.9 L367.4,263.9 L367.9,263.9 L368.4,263.9 L368.9,263.9 L369.4,263.9 L369.9,263.9 L370.4,264.0 L370.9,264.0 L371.4,264.0 L371.9,264.0 L372.4,264.0 L372.9,264.0 L373.4,264.0 L373.9,264.0 L374.4,264.0 L374.9,264.0 L375.4,264.0 L375.9,264.0 L376.4,264.0 L376.9,264.0 L377.5,264.0 L378.0,264.0 L378.5,264.0 L379.0,264.0 L379.5,264.0 L380.0,264.0 L380.5,264.0 L381.0,264.0 L381.5,264.0 L382.0,264.0 L382.5,264.0 L383.0,264.0 L383.5,264.0 L384.0,264.0 L384.5,264.0 L385.0,264.0 L385.5,264.0 L386.0,264.0 L386.5,264.0 L387.0,264.0 L387.5,264.0 L388.0,264.0 L388.5,264.0 L389.0,264.0 L389.5,264.0 L390.0,264.0 L390.5,264.0 L391.0,264.0 L391.5,264.0 L392.0,264.0" fill="none" stroke="#d44d15" stroke-width="2.8" stroke-linejoin="round"/><rect x="221.5" y="218.5" width="160" height="17" fill="#fff" stroke="#2a2a2a" stroke-width="1"/><path d="M228,227.5 L263,227.5" stroke="#d44d15" stroke-width="1" opacity=".9"/></svg>
<span class="t" style="left:88.53px;top:555.67px;font-size:10.67px;line-height:10.67px;color:#5c5c5c;font-weight:normal;transform:scaleX(1.0000);">0</span>
<span class="t" style="left:138.70px;top:555.67px;font-size:10.67px;line-height:10.67px;color:#5c5c5c;font-weight:normal;transform:scaleX(1.0000);">5</span>
<span class="t" style="left:185.90px;top:555.67px;font-size:10.67px;line-height:10.67px;color:#5c5c5c;font-weight:normal;transform:scaleX(1.0000);">10</span>
<span class="t" style="left:236.07px;top:555.67px;font-size:10.67px;line-height:10.67px;color:#5c5c5c;font-weight:normal;transform:scaleX(1.0000);">15</span>
<span class="t" style="left:286.23px;top:555.67px;font-size:10.67px;line-height:10.67px;color:#5c5c5c;font-weight:normal;transform:scaleX(1.0000);">20</span>
<span class="t" style="left:336.40px;top:555.67px;font-size:10.67px;line-height:10.67px;color:#5c5c5c;font-weight:normal;transform:scaleX(1.0000);">25</span>
<span class="t" style="left:386.57px;top:555.67px;font-size:10.67px;line-height:10.67px;color:#5c5c5c;font-weight:normal;transform:scaleX(1.0000);">30</span>
<span class="t" style="left:80.07px;top:544.37px;font-size:10.67px;line-height:10.67px;color:#5c5c5c;font-weight:normal;transform:scaleX(1.0000);">0</span>
<span class="t" style="left:71.17px;top:487.20px;font-size:10.67px;line-height:10.67px;color:#5c5c5c;font-weight:normal;transform:scaleX(1.0000);">0.2</span>
<span class="t" style="left:71.17px;top:430.03px;font-size:10.67px;line-height:10.67px;color:#5c5c5c;font-weight:normal;transform:scaleX(1.0000);">0.4</span>
<span class="t" style="left:71.17px;top:372.87px;font-size:10.67px;line-height:10.67px;color:#5c5c5c;font-weight:normal;transform:scaleX(1.0000);">0.6</span>
<span class="t" style="left:71.17px;top:315.70px;font-size:10.67px;line-height:10.67px;color:#5c5c5c;font-weight:normal;transform:scaleX(1.0000);">0.8</span>
<span class="t" style="left:80.07px;top:258.53px;font-size:10.67px;line-height:10.67px;color:#5c5c5c;font-weight:normal;transform:scaleX(1.0000);">1</span>
<span class="t" style="left:71.17px;top:201.37px;font-size:10.67px;line-height:10.67px;color:#5c5c5c;font-weight:normal;transform:scaleX(1.0000);">1.2</span>
<span class="t" style="left:147.70px;top:185.32px;font-size:13.33px;line-height:13.33px;color:#0a0a0a;font-weight:bold;transform:scaleX(0.9950);">Step Plot: Reference tracking</span>
<span class="t" style="left:195.25px;top:571.92px;font-size:13.33px;line-height:13.33px;color:#1e1e1e;font-weight:normal;transform:scaleX(1.0037);">Time (seconds)</span>
<span class="t" style="left:267.20px;top:221.07px;font-size:10.67px;line-height:10.67px;color:#161616;font-weight:normal;transform:scaleX(0.9869);">Tuned response,Plant1</span>
<span class="t" style="left:51.72px;top:407.64px;font-size:13.33px;line-height:13.33px;color:#1e1e1e;transform:rotate(-90deg);">Amplitude</span>
<svg style="left:0;top:0" width="850" height="629" viewBox="0 0 850 629"><rect x="500.5" y="206.5" width="301" height="343" fill="#fff"/><path d="M500.5,207 L500.5,549 M543.5,207 L543.5,549 M586.5,207 L586.5,549 M629.5,207 L629.5,549 M672.5,207 L672.5,549 M715.5,207 L715.5,549 M758.5,207 L758.5,549 M801.5,207 L801.5,549 M501,549.5 L801,549.5 M501,500.5 L801,500.5 M501,451.5 L801,451.5 M501,402.5 L801,402.5 M501,353.5 L801,353.5 M501,304.5 L801,304.5 M501,255.5 L801,255.5 M501,206.5 L801,206.5" stroke="#f4f4f4" stroke-width="1" fill="none"/><rect x="500.5" y="206.5" width="301" height="343" fill="none" stroke="#5e5e5e" stroke-width="1"/><path d="M500.5,549 L500.5,546 M500.5,207 L500.5,210 M543.5,549 L543.5,546 M543.5,207 L543.5,210 M586.5,549 L586.5,546 M586.5,207 L586.5,210 M629.5,549 L629.5,546 M629.5,207 L629.5,210 M672.5,549 L672.5,546 M672.5,207 L672.5,210 M715.5,549 L715.5,546 M715.5,207 L715.5,210 M758.5,549 L758.5,546 M758.5,207 L758.5,210 M801.5,549 L801.5,546 M801.5,207 L801.5,210 M501,549.5 L504,549.5 M801,549.5 L798,549.5 M501,500.5 L504,500.5 M801,500.5 L798,500.5 M501,451.5 L504,451.5 M801,451.5 L798,451.5 M501,402.5 L504,402.5 M801,402.5 L798,402.5 M501,353.5 L504,353.5 M801,353.5 L798,353.5 M501,304.5 L504,304.5 M801,304.5 L798,304.5 M501,255.5 L504,255.5 M801,255.5 L798,255.5 M501,206.5 L504,206.5 M801,206.5 L798,206.5" stroke="#5e5e5e" stroke-width="1" fill="none"/><path d="M500.0,451.1 L500.5,452.6 L501.1,454.0 L501.6,455.5 L502.1,457.0 L502.7,458.5 L503.2,459.9 L503.8,461.4 L504.3,462.8 L504.8,464.3 L505.4,465.8 L505.9,467.2 L506.4,468.7 L507.0,470.1 L507.5,471.6 L508.1,473.0 L508.6,474.5 L509.1,475.9 L509.7,477.4 L510.2,478.8 L510.8,480.3 L511.3,481.7 L511.8,483.1 L512.4,484.6 L512.9,486.0 L513.4,487.5 L514.0,488.9 L514.5,490.3 L515.0,491.7 L515.6,493.2 L516.1,494.6 L516.7,496.0 L517.2,497.4 L517.7,498.9 L518.3,500.3 L518.8,501.7 L519.4,503.1 L519.9,504.5 L520.4,506.0 L521.0,507.4 L521.5,508.8 L522.0,510.2 L522.6,511.6 L523.1,513.0 L523.6,514.4 L524.2,515.8 L524.7,517.2 L525.3,518.6 L525.8,520.0 L526.3,521.4 L526.9,522.8 L527.4,524.2 L528.0,525.6 L528.5,527.0 L529.0,528.4 L529.6,529.8 L530.1,531.2 L530.6,532.6 L531.2,534.0 L531.7,532.4 L532.2,530.8 L532.8,529.3 L533.3,527.7 L533.9,526.0 L534.4,524.4 L534.9,522.8 L535.5,521.1 L536.0,519.4 L536.5,517.7 L537.1,516.0 L537.6,514.3 L538.2,512.6 L538.7,510.8 L539.2,509.1 L539.8,507.3 L540.3,505.5 L540.9,503.7 L541.4,501.9 L541.9,500.0 L542.5,498.2 L543.0,496.3 L543.5,494.4 L544.1,492.5 L544.6,490.6 L545.1,488.7 L545.7,486.7 L546.2,484.8 L546.8,482.8 L547.3,480.8 L547.8,478.8 L548.4,476.8 L548.9,474.8 L549.5,472.8 L550.0,470.7 L550.5,468.6 L551.1,466.6 L551.6,464.5 L552.1,462.4 L552.7,460.2 L553.2,458.1 L553.8,455.9 L554.3,453.8 L554.8,451.6 L555.4,449.4 L555.9,447.2 L556.4,445.0 L557.0,442.8 L557.5,440.5 L558.0,438.2 L558.6,436.0 L559.1,433.7 L559.7,431.4 L560.2,429.1 L560.7,426.7 L561.3,424.4 L561.8,422.0 L562.4,419.7 L562.9,417.3 L563.4,414.9 L564.0,412.6 L564.5,410.3 L565.0,407.9 L565.6,405.6 L566.1,403.3 L566.6,401.0 L567.2,398.8 L567.7,396.5 L568.3,394.3 L568.8,392.0 L569.3,389.8 L569.9,387.6 L570.4,385.4 L571.0,383.2 L571.5,381.1 L572.0,378.9 L572.6,376.8 L573.1,374.7 L573.6,372.6 L574.2,370.5 L574.7,368.4 L575.2,366.3 L575.8,364.3 L576.3,362.3 L576.9,360.2 L577.4,358.3 L577.9,356.3 L578.5,354.3 L579.0,352.4 L579.5,350.4 L580.1,348.5 L580.6,346.6 L581.2,344.7 L581.7,342.9 L582.2,341.0 L582.8,339.2 L583.3,337.4 L583.9,335.6 L584.4,333.8 L584.9,332.0 L585.5,330.3 L586.0,328.6 L586.5,326.9 L587.1,325.2 L587.6,323.5 L588.1,321.9 L588.7,320.2 L589.2,318.6 L589.8,317.0 L590.3,315.5 L590.8,313.9 L591.4,312.4 L591.9,310.9 L592.5,309.4 L593.0,307.9 L593.5,306.4 L594.1,305.0 L594.6,303.6 L595.1,302.2 L595.7,300.8 L596.2,299.5 L596.8,298.1 L597.3,296.8 L597.8,295.5 L598.4,294.2 L598.9,293.0 L599.4,291.7 L600.0,290.5 L600.5,289.3 L601.0,288.1 L601.6,287.0 L602.1,285.8 L602.7,284.7 L603.2,283.6 L603.7,282.5 L604.3,281.5 L604.8,280.4 L605.4,279.4 L605.9,278.4 L606.4,277.4 L607.0,276.4 L607.5,275.4 L608.0,274.5 L608.6,273.5 L609.1,272.6 L609.6,271.7 L610.2,270.9 L610.7,270.0 L611.3,269.2 L611.8,268.3 L612.3,267.5 L612.9,266.7 L613.4,266.0 L614.0,265.2 L614.5,264.5 L615.0,263.7 L615.6,263.0 L616.1,262.3 L616.6,261.6 L617.2,261.0 L617.7,260.3 L618.2,259.7 L618.8,259.1 L619.3,258.5 L619.9,257.9 L620.4,257.3 L620.9,256.7 L621.5,256.2 L622.0,255.6 L622.5,255.1 L623.1,254.6 L623.6,254.1 L624.2,253.6 L624.7,253.2 L625.2,252.7 L625.8,252.2 L626.3,251.8 L626.9,251.4 L627.4,251.0 L627.9,250.6 L628.5,250.2 L629.0,249.8 L629.5,249.5 L630.1,249.1 L630.6,248.8 L631.1,248.5 L631.7,248.1 L632.2,247.8 L632.8,247.5 L633.3,247.3 L633.8,247.0 L634.4,246.7 L634.9,246.5 L635.5,246.2 L636.0,246.0 L636.5,245.7 L637.1,245.5 L637.6,245.3 L638.1,245.1 L638.7,244.9 L639.2,244.7 L639.8,244.6 L640.3,244.4 L640.8,244.3 L641.4,244.1 L641.9,244.0 L642.4,243.8 L643.0,243.7 L643.5,243.6 L644.0,243.5 L644.6,243.4 L645.1,243.3 L645.7,243.2 L646.2,243.1 L646.7,243.0 L647.3,243.0 L647.8,242.9 L648.4,242.8 L648.9,242.8 L649.4,242.7 L650.0,242.7 L650.5,242.7 L651.0,242.6 L651.6,242.6 L652.1,242.6 L652.7,242.6 L653.2,242.6 L653.7,242.6 L654.3,242.6 L654.8,242.6 L655.3,242.6 L655.9,242.6 L656.4,242.6 L657.0,242.7 L657.5,242.7 L658.0,242.7 L658.6,242.8 L659.1,242.8 L659.6,242.8 L660.2,242.9 L660.7,242.9 L661.2,243.0 L661.8,243.1 L662.3,243.1 L662.9,243.2 L663.4,243.3 L663.9,243.3 L664.5,243.4 L665.0,243.5 L665.5,243.6 L666.1,243.6 L666.6,243.7 L667.2,243.8 L667.7,243.9 L668.2,244.0 L668.8,244.1 L669.3,244.2 L669.9,244.3 L670.4,244.4 L670.9,244.5 L671.5,244.6 L672.0,244.7 L672.5,244.8 L673.1,244.9 L673.6,245.0 L674.1,245.2 L674.7,245.3 L675.2,245.4 L675.8,245.5 L676.3,245.6 L676.8,245.7 L677.4,245.9 L677.9,246.0 L678.5,246.1 L679.0,246.2 L679.5,246.3 L680.1,246.5 L680.6,246.6 L681.1,246.7 L681.7,246.8 L682.2,247.0 L682.8,247.1 L683.3,247.2 L683.8,247.4 L684.4,247.5 L684.9,247.6 L685.4,247.7 L686.0,247.9 L686.5,248.0 L687.1,248.1 L687.6,248.3 L688.1,248.4 L688.7,248.5 L689.2,248.7 L689.7,248.8 L690.3,248.9 L690.8,249.0 L691.4,249.2 L691.9,249.3 L692.4,249.4 L693.0,249.6 L693.5,249.7 L694.0,249.8 L694.6,249.9 L695.1,250.1 L695.6,250.2 L696.2,250.3 L696.7,250.5 L697.3,250.6 L697.8,250.7 L698.3,250.8 L698.9,251.0 L699.4,251.1 L700.0,251.2 L700.5,251.3 L701.0,251.4 L701.6,251.6 L702.1,251.7 L702.6,251.8 L703.2,251.9 L703.7,252.0 L704.2,252.2 L704.8,252.3 L705.3,252.4 L705.9,252.5 L706.4,252.6 L706.9,252.7 L707.5,252.8 L708.0,253.0 L708.6,253.1 L709.1,253.2 L709.6,253.3 L710.2,253.4 L710.7,253.5 L711.2,253.6 L711.8,253.7 L712.3,253.8 L712.9,253.9 L713.4,254.0 L713.9,254.1 L714.5,254.2 L715.0,254.3 L715.5,254.4 L716.1,254.5 L716.6,254.6 L717.1,254.7 L717.7,254.8 L718.2,254.9 L718.8,255.0 L719.3,255.1 L719.8,255.2 L720.4,255.3 L720.9,255.4 L721.5,255.5 L722.0,255.5 L722.5,255.6 L723.1,255.7 L723.6,255.8 L724.1,255.9 L724.7,256.0 L725.2,256.0 L725.8,256.1 L726.3,256.2 L726.8,256.3 L727.4,256.4 L727.9,256.4 L728.4,256.5 L729.0,256.6 L729.5,256.7 L730.0,256.7 L730.6,256.8 L731.1,256.9 L731.7,256.9 L732.2,257.0 L732.7,257.1 L733.3,257.1 L733.8,257.2 L734.4,257.3 L734.9,257.3 L735.4,257.4 L736.0,257.5 L736.5,257.5 L737.0,257.6 L737.6,257.6 L738.1,257.7 L738.6,257.8 L739.2,257.8 L739.7,257.9 L740.3,257.9 L740.8,258.0 L741.3,258.0 L741.9,258.1 L742.4,258.1 L743.0,258.2 L743.5,258.2 L744.0,258.3 L744.6,258.3 L745.1,258.4 L745.6,258.4 L746.2,258.5 L746.7,258.5 L747.2,258.5 L747.8,258.6 L748.3,258.6 L748.9,258.7 L749.4,258.7 L749.9,258.7 L750.5,258.8 L751.0,258.8 L751.5,258.9 L752.1,258.9 L752.6,258.9 L753.2,259.0 L753.7,259.0 L754.2,259.0 L754.8,259.1 L755.3,259.1 L755.9,259.1 L756.4,259.2 L756.9,259.2 L757.5,259.2 L758.0,259.3 L758.5,259.3 L759.1,259.3 L759.6,259.3 L760.1,259.4 L760.7,259.4 L761.2,259.4 L761.8,259.4 L762.3,259.5 L762.8,259.5 L763.4,259.5 L763.9,259.5 L764.5,259.6 L765.0,259.6 L765.5,259.6 L766.1,259.6 L766.6,259.6 L767.1,259.7 L767.7,259.7 L768.2,259.7 L768.8,259.7 L769.3,259.7 L769.8,259.7 L770.4,259.8 L770.9,259.8 L771.4,259.8 L772.0,259.8 L772.5,259.8 L773.0,259.8 L773.6,259.8 L774.1,259.9 L774.7,259.9 L775.2,259.9 L775.7,259.9 L776.3,259.9 L776.8,259.9 L777.4,259.9 L777.9,259.9 L778.4,259.9 L779.0,260.0 L779.5,260.0 L780.0,260.0 L780.6,260.0 L781.1,260.0 L781.6,260.0 L782.2,260.0 L782.7,260.0 L783.3,260.0 L783.8,260.0 L784.3,260.0 L784.9,260.0 L785.4,260.0 L786.0,260.1 L786.5,260.1 L787.0,260.1 L787.6,260.1 L788.1,260.1 L788.6,260.1 L789.2,260.1 L789.7,260.1 L790.2,260.1 L790.8,260.1 L791.3,260.1 L791.9,260.1 L792.4,260.1 L792.9,260.1 L793.5,260.1 L794.0,260.1 L794.5,260.1 L795.1,260.1 L795.6,260.1 L796.2,260.1 L796.7,260.1 L797.2,260.1 L797.8,260.1 L798.3,260.1 L798.9,260.1 L799.4,260.1 L799.9,260.1 L800.5,260.1 L801.0,260.1" fill="none" stroke="#d44d15" stroke-width="2.8" stroke-linejoin="round"/><rect x="630.5" y="218.5" width="160" height="17" fill="#fff" stroke="#2a2a2a" stroke-width="1"/><path d="M637,227.5 L672,227.5" stroke="#d44d15" stroke-width="1" opacity=".9"/></svg>
<span class="t" style="left:497.53px;top:555.67px;font-size:10.67px;line-height:10.67px;color:#5c5c5c;font-weight:normal;transform:scaleX(1.0000);">0</span>
<span class="t" style="left:540.53px;top:555.67px;font-size:10.67px;line-height:10.67px;color:#5c5c5c;font-weight:normal;transform:scaleX(1.0000);">2</span>
<span class="t" style="left:583.53px;top:555.67px;font-size:10.67px;line-height:10.67px;color:#5c5c5c;font-weight:normal;transform:scaleX(1.0000);">4</span>
<span class="t" style="left:626.53px;top:555.67px;font-size:10.67px;line-height:10.67px;color:#5c5c5c;font-weight:normal;transform:scaleX(1.0000);">6</span>
<span class="t" style="left:669.53px;top:555.67px;font-size:10.67px;line-height:10.67px;color:#5c5c5c;font-weight:normal;transform:scaleX(1.0000);">8</span>
<span class="t" style="left:709.57px;top:555.67px;font-size:10.67px;line-height:10.67px;color:#5c5c5c;font-weight:normal;transform:scaleX(1.0000);">10</span>
<span class="t" style="left:752.57px;top:555.67px;font-size:10.67px;line-height:10.67px;color:#5c5c5c;font-weight:normal;transform:scaleX(1.0000);">12</span>
<span class="t" style="left:795.57px;top:555.67px;font-size:10.67px;line-height:10.67px;color:#5c5c5c;font-weight:normal;transform:scaleX(1.0000);">14</span>
<span class="t" style="left:470.68px;top:544.37px;font-size:10.67px;line-height:10.67px;color:#5c5c5c;font-weight:normal;transform:scaleX(1.0000);">-0.45</span>
<span class="t" style="left:476.61px;top:495.37px;font-size:10.67px;line-height:10.67px;color:#5c5c5c;font-weight:normal;transform:scaleX(1.0000);">-0.4</span>
<span class="t" style="left:470.68px;top:446.37px;font-size:10.67px;line-height:10.67px;color:#5c5c5c;font-weight:normal;transform:scaleX(1.0000);">-0.35</span>
<span class="t" style="left:476.61px;top:397.37px;font-size:10.67px;line-height:10.67px;color:#5c5c5c;font-weight:normal;transform:scaleX(1.0000);">-0.3</span>
<span class="t" style="left:470.68px;top:348.37px;font-size:10.67px;line-height:10.67px;color:#5c5c5c;font-weight:normal;transform:scaleX(1.0000);">-0.25</span>
<span class="t" style="left:476.61px;top:299.37px;font-size:10.67px;line-height:10.67px;color:#5c5c5c;font-weight:normal;transform:scaleX(1.0000);">-0.2</span>
<span class="t" style="left:470.68px;top:250.37px;font-size:10.67px;line-height:10.67px;color:#5c5c5c;font-weight:normal;transform:scaleX(1.0000);">-0.15</span>
<span class="t" style="left:476.61px;top:201.37px;font-size:10.67px;line-height:10.67px;color:#5c5c5c;font-weight:normal;transform:scaleX(1.0000);">-0.1</span>
<span class="t" style="left:566.15px;top:185.32px;font-size:13.33px;line-height:13.33px;color:#0a0a0a;font-weight:bold;transform:scaleX(0.9889);">Step Plot: Controller effort</span>
<span class="t" style="left:604.25px;top:571.92px;font-size:13.33px;line-height:13.33px;color:#1e1e1e;font-weight:normal;transform:scaleX(1.0037);">Time (seconds)</span>
<span class="t" style="left:676.20px;top:221.07px;font-size:10.67px;line-height:10.67px;color:#161616;font-weight:normal;transform:scaleX(0.9869);">Tuned response,Plant1</span>
<span class="t" style="left:450.72px;top:407.64px;font-size:13.33px;line-height:13.33px;color:#1e1e1e;transform:rotate(-90deg);">Amplitude</span>
<svg style="left:633px;top:32px" width="17" height="16" viewBox="0 0 17 16">
<rect x=".9" y=".9" width="12.4" height="12" fill="#fff" stroke="#1c1c1c" stroke-width="1.2"/>
<path d="M4.4,11.5 C4,8 5.2,6 8,5.4 L6.6,4 L11.2,3 L10.6,7.6 L9.2,6.4 C7.2,7 6.4,8.6 6.6,11.5 Z" fill="#111"/>
<path d="M12.2,8.6 L13.3,10.6 L15.6,10.2 L14.4,12.1 L15.8,14 L13.4,13.8 L12.4,15.8 L11.5,13.7 L9.2,13.6 L10.9,12.1 L9.9,10 L12,10.6 Z" fill="#f6e23a" stroke="#c9a800" stroke-width=".6"/>
</svg>
<svg style="left:656.5px;top:33.5px" width="14" height="13" viewBox="0 0 14 13">
<path d="M.4,.4 L13.6,.4 L13.6,12.6 L.4,12.6 Z" fill="#a9bcd4"/>
<rect x="2.4" y=".4" width="9.2" height="4.8" fill="#c4d2e3"/>
<rect x="3" y="7.2" width="8" height="5.4" fill="#c4d2e3"/>
<rect x="4.2" y="8.2" width="2.2" height="3.6" fill="#8fa7c4"/>
<path d="M2.4,2.6 L11.6,2.6" stroke="#a9bcd4" stroke-width=".9"/>
<path d="M.4,12.9 L13.6,12.9" stroke="#8fa7c4" stroke-width=".8"/>
</svg>
<svg style="left:677.5px;top:33px" width="11" height="14" viewBox="0 0 11 14">
<path d="M7.6,.6 L3.4,9.2 M3.2,.6 L7.6,9.2" stroke="#c4d2e3" stroke-width="1.5" fill="none"/>
<ellipse cx="2.6" cy="11" rx="2" ry="1.8" fill="none" stroke="#a9bcd4" stroke-width="1.3"/>
<ellipse cx="8.4" cy="11" rx="2" ry="1.8" fill="none" stroke="#a9bcd4" stroke-width="1.3"/>
<path d="M0,13.6 L11,13.6" stroke="#8fa7c4" stroke-width=".8" opacity=".7"/>
</svg>
<svg style="left:699.5px;top:32.5px" width="13" height="14" viewBox="0 0 13 14">
<rect x=".6" y=".6" width="7" height="8.6" fill="#c4d2e3" stroke="#8fa7c4" stroke-width="1"/>
<rect x="4.8" y="4.2" width="7.4" height="9" fill="#c4d2e3" stroke="#8fa7c4" stroke-width="1"/>
<path d="M6.4,6.6 L10.6,6.6 M6.4,8.6 L10.6,8.6 M6.4,10.6 L10.6,10.6 M2,3 L6,3" stroke="#8fa7c4" stroke-width=".9"/>
</svg>
<svg style="left:720.5px;top:32px" width="13" height="15" viewBox="0 0 13 15">
<rect x=".6" y="2" width="9.6" height="11.6" fill="#8fa7c4" stroke="#a9bcd4" stroke-width="1"/>
<rect x="3" y=".6" width="4.8" height="2.8" fill="#c4d2e3" stroke="#8fa7c4" stroke-width=".7"/>
<rect x="5" y="5.6" width="7.2" height="8.6" fill="#c4d2e3" stroke="#8fa7c4" stroke-width="1"/>
<path d="M6.6,8 L10.8,8 M6.6,10 L10.8,10 M6.6,12 L10.8,12" stroke="#8fa7c4" stroke-width=".9"/>
</svg>
<svg style="left:742.5px;top:35px" width="11" height="11" viewBox="0 0 11 11"><g transform="">
<path d="M.4,3.4 L3.8,.6 L3.8,2.2 L6.6,2.2 C9.2,2.2 10.5,3.8 10.5,5.9 C10.5,8.2 9,9.8 6.6,9.8 L2.6,9.8 L2.6,7.6 L6.4,7.6 C7.6,7.6 8.3,7 8.3,5.9 C8.3,4.9 7.6,4.4 6.4,4.4 L3.8,4.4 L3.8,6.2 Z" fill="#a9bcd4" stroke="#8fa7c4" stroke-width=".7"/>
<path d="M2.2,10.6 L7,10.6" stroke="#c4d2e3" stroke-width=".8"/></g></svg>
<svg style="left:762.5px;top:35px" width="11" height="11" viewBox="0 0 11 11"><g transform="translate(11,0) scale(-1,1)">
<path d="M.4,3.4 L3.8,.6 L3.8,2.2 L6.6,2.2 C9.2,2.2 10.5,3.8 10.5,5.9 C10.5,8.2 9,9.8 6.6,9.8 L2.6,9.8 L2.6,7.6 L6.4,7.6 C7.6,7.6 8.3,7 8.3,5.9 C8.3,4.9 7.6,4.4 6.4,4.4 L3.8,4.4 L3.8,6.2 Z" fill="#a9bcd4" stroke="#8fa7c4" stroke-width=".7"/>
<path d="M2.2,10.6 L7,10.6" stroke="#c4d2e3" stroke-width=".8"/></g></svg>
<svg style="left:783px;top:32px" width="15" height="14" viewBox="0 0 15 14">
<rect x="1.6" y=".6" width="9.6" height="8" fill="#e8e8e8" stroke="#555" stroke-width="1"/>
<rect x="2.2" y="1.2" width="8.4" height="1.6" fill="#cfcfcf"/>
<rect x=".6" y="8.6" width="5" height="4.8" fill="#f2f2f2" stroke="#777" stroke-width=".8"/>
<rect x="4.2" y="4.6" width="10.2" height="8" fill="#fafafa" stroke="#444" stroke-width="1"/>
<rect x="4.8" y="5.2" width="9" height="1.8" fill="#3c67b0"/>
</svg>
<svg style="left:804px;top:32px" width="15" height="15" viewBox="0 0 15 15">
<circle cx="7.5" cy="7.5" r="6.5" fill="#f6f6f6" stroke="#4e5a6a" stroke-width="1.1"/>
<path d="M5.2,5.6 C5.2,4 6.2,3.2 7.6,3.2 C9,3.2 10,4 10,5.3 C10,6.4 9.4,6.9 8.6,7.5 C8,7.9 7.8,8.3 7.8,9" fill="none" stroke="#151515" stroke-width="1.7"/>
<rect x="6.9" y="10" width="1.8" height="1.8" fill="#151515"/>
</svg>
<svg style="left:828px;top:34px" width="11" height="10" viewBox="0 0 11 10">
<rect x=".4" y=".2" width="9.8" height="1.8" fill="#cbd8ea"/>
<path d="M5.3,3.6 L9.8,8.8 L.8,8.8 Z" fill="#cbd8ea"/>
</svg>
</body></html>
